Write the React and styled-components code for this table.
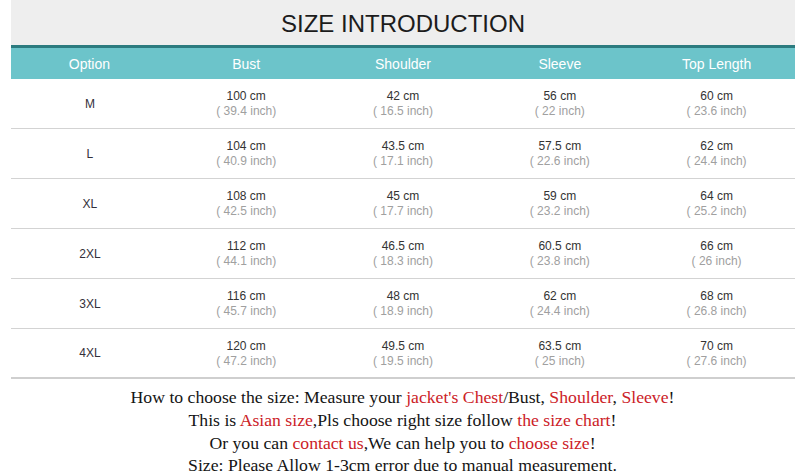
import React from "react";
import styled, { createGlobalStyle } from "styled-components";

const GlobalStyle = createGlobalStyle`
	html, body {
		margin: 0;
		padding: 0;
		background: #ffffff;
	}
	body {
		font-family: "Liberation Sans", Arial, sans-serif;
	}
`;

const Page = styled.div`
	width: 805px;
	height: 475px;
	overflow: hidden;
	background: #fff;
`;

const Chart = styled.div`
	margin: 0 10px 0 11px;
`;

const TitleBand = styled.div`
	height: 45px;
	background: #eeeeee;
	display: flex;
	align-items: center;
	justify-content: center;
	font-size: 24px;
	color: #1c1c1c;
	padding-top: 3px;
	box-sizing: border-box;
`;

const HeaderRow = styled.div`
	display: grid;
	grid-template-columns: repeat(5, 1fr);
	height: 31px;
	background: #6cc4ca;
	border-top: 3px solid #2c7b7f;
	color: #ffffff;
	font-size: 14px;
	align-items: center;
`;

const HeadCell = styled.div`
	text-align: center;
	padding-top: 1px;
`;

const Row = styled.div`
	display: grid;
	grid-template-columns: repeat(5, 1fr);
	height: 50px;
	box-sizing: border-box;
	border-bottom: ${p => (p.$last ? "2px solid #cfcfcf" : "1px solid #d3d3d3")};
	align-items: center;
`;

const SizeCell = styled.div`
	text-align: center;
	font-size: 12px;
	color: #33303a;
	padding-left: 1px;
`;

const Measure = styled.div`
	text-align: center;
	font-size: 12px;
	line-height: 15px;
	padding-top: 1px;
`;

const Cm = styled.div`
	color: #333333;
`;

const Inch = styled.div`
	color: #a0a0a0;
`;

const Notes = styled.div`
	padding-top: 7px;
	text-align: center;
	font-family: "Liberation Serif", "Times New Roman", serif;
	font-size: 17.7px;
	line-height: 22.8px;
	color: #141414;
`;

const Red = styled.span`
	color: #cc2127;
`;

const columns = ["Option", "Bust", "Shoulder", "Sleeve", "Top Length"];

const rows = [
	["M", ["100", "39.4"], ["42", "16.5"], ["56", "22"], ["60", "23.6"]],
	["L", ["104", "40.9"], ["43.5", "17.1"], ["57.5", "22.6"], ["62", "24.4"]],
	["XL", ["108", "42.5"], ["45", "17.7"], ["59", "23.2"], ["64", "25.2"]],
	["2XL", ["112", "44.1"], ["46.5", "18.3"], ["60.5", "23.8"], ["66", "26"]],
	["3XL", ["116", "45.7"], ["48", "18.9"], ["62", "24.4"], ["68", "26.8"]],
	["4XL", ["120", "47.2"], ["49.5", "19.5"], ["63.5", "25"], ["70", "27.6"]],
];

export default function App() {
	return (
		<Page>
			<GlobalStyle />
			<Chart>
				<TitleBand>SIZE INTRODUCTION</TitleBand>
				<HeaderRow>
					{columns.map(c => (
						<HeadCell key={c}>{c}</HeadCell>
					))}
				</HeaderRow>
				{rows.map(([size, ...vals], i) => (
					<Row key={size} $last={i === rows.length - 1}>
						<SizeCell>{size}</SizeCell>
						{vals.map(([cm, inch], j) => (
							<Measure key={j}>
								<Cm>{cm} cm</Cm>
								<Inch>( {inch} inch)</Inch>
							</Measure>
						))}
					</Row>
				))}
			</Chart>
			<Notes>
				<div>
					How to choose the size: Measure your <Red>jacket's Chest</Red>/Bust, <Red>Shoulder</Red>, <Red>Sleeve</Red>!
				</div>
				<div>
					This is <Red>Asian size</Red>,Pls choose right size follow <Red>the size chart</Red>!
				</div>
				<div>
					Or you can <Red>contact us</Red>,We can help you to <Red>choose size</Red>!
				</div>
				<div>Size: Please Allow 1-3cm error due to manual measurement.</div>
			</Notes>
		</Page>
	);
}
